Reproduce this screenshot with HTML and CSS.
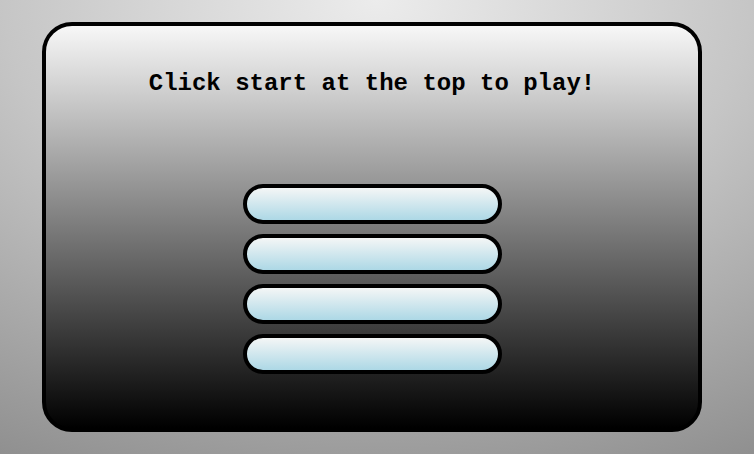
FILE: index.html
```html
<!DOCTYPE html>
<html>
<head>
<meta charset="utf-8">
<link rel="stylesheet" href="styles.css">
</head>
<body>
<div class="card">
  <h1 class="title">Click start at the top to play!</h1>
  <div class="answers">
    <button class="answer"></button>
    <button class="answer"></button>
    <button class="answer"></button>
    <button class="answer"></button>
  </div>
</div>
</body>
</html>
```
FILE: styles.css
```css
html, body {
  margin: 0;
  height: 100%;
}
body {
  width: 754px;
  height: 454px;
  overflow: hidden;
  background: radial-gradient(ellipse 110% 120% at 50% 0%, #ececec 0%, #c6c6c6 45%, #8a8a8a 100%);
  padding: 22px 0 0 42px;
  box-sizing: border-box;
}
.card {
  box-sizing: border-box;
  width: 660px;
  height: 410px;
  border: 4px solid #000;
  border-radius: 30px;
  background: linear-gradient(to bottom, #f7f7f7 0%, #000 100%);
  display: flex;
  flex-direction: column;
  align-items: center;
  padding-top: 44px;
}
.title {
  margin: 0;
  font-family: "Liberation Mono", "Courier New", monospace;
  font-weight: bold;
  font-size: 24px;
  line-height: 27px;
  color: #000;
}
.answers {
  margin-top: 87px;
  display: flex;
  flex-direction: column;
  gap: 10px;
}
.answer {
  display: block;
  box-sizing: border-box;
  width: 259px;
  height: 40px;
  border: 4px solid #000;
  border-radius: 20px;
  background: linear-gradient(to bottom, #f4f6f6 0%, #add8e6 100%);
  padding: 0;
  margin: 0;
}
```
